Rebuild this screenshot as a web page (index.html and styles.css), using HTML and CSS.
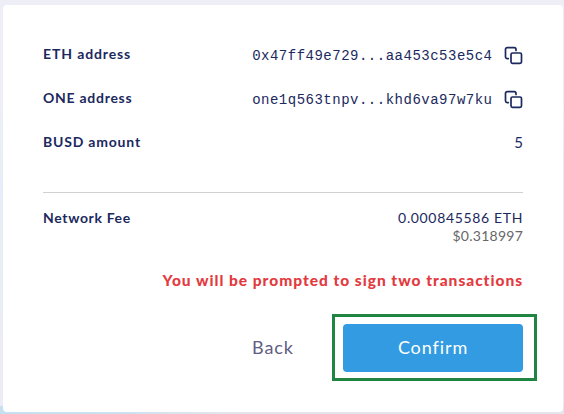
FILE: index.html
```html
<!DOCTYPE html>
<html lang="en">
<head>
<meta charset="utf-8">
<title>Confirm transfer</title>
<link rel="stylesheet" href="styles.css">
</head>
<body>
<main class="card">
  <div class="row">
    <span class="label eth">ETH address</span>
    <span class="address">0x47ff49e729...aa453c53e5c4</span>
    <svg class="copy" viewBox="0 0 20 20"><path d="M4.3 12.6H3.2A1.7 1.7 0 0 1 1.5 11V3.4a1.7 1.7 0 0 1 1.7-1.7h7.1A1.7 1.7 0 0 1 12 3.4v1.1"/><rect x="7" y="7" width="10.5" height="10.3" rx="1.5"/></svg>
  </div>
  <div class="row">
    <span class="label one">ONE address</span>
    <span class="address">one1q563tnpv...khd6va97w7ku</span>
    <svg class="copy" viewBox="0 0 20 20"><path d="M4.3 12.6H3.2A1.7 1.7 0 0 1 1.5 11V3.4a1.7 1.7 0 0 1 1.7-1.7h7.1A1.7 1.7 0 0 1 12 3.4v1.1"/><rect x="7" y="7" width="10.5" height="10.3" rx="1.5"/></svg>
  </div>
  <div class="row">
    <span class="label busd">BUSD amount</span>
    <span class="value">5</span>
  </div>
  <div class="fee">
    <span class="label network">Network Fee</span>
    <div class="amounts">
      <div class="value total">0.000845586 ETH</div>
      <div class="usd">$0.318997</div>
    </div>
  </div>
  <p class="warning">You will be prompted to sign two transactions</p>
  <div class="actions">
    <button class="back">Back</button>
    <div class="highlight"><button class="confirm">Confirm</button></div>
  </div>
</main>
</body>
</html>
```
FILE: styles.css
```css
* { box-sizing: border-box; }
body {
  margin: 0;
  height: 414px;
  padding: 5px 1px 2px 3px;
  overflow: hidden;
  background:
    linear-gradient(90deg, #c5e1ef 0, #cbe1ee 120px, #e5e6ed 230px) 0 100% / 100% 8px no-repeat,
    linear-gradient(#eeeff6 0, #eeeff6 100px, #e5eef8 180px, #e6eef8 260px, #ebecf5 340px);
  font-family: Lato, "Liberation Sans", sans-serif;
  color: #1b295e;
}
.card {
  height: 407px;
  padding: 27px 40px 0;
  border-radius: 4px;
  background: #fff;
}
.row { display: flex; align-items: center; height: 44px; }
.label { font-size: 14px; line-height: 18px; font-weight: 700; }
.eth { letter-spacing: .88px; }
.one { letter-spacing: .73px; }
.busd { letter-spacing: .8px; }
.network { letter-spacing: .65px; }
.address {
  margin: 4px 0 0 auto;
  font: 14px/18px "Liberation Mono", monospace;
  letter-spacing: .5px;
}
.copy {
  width: 20px;
  height: 20px;
  margin: 3px 0 0 10.5px;
  position: relative;
  left: .5px;
  fill: none;
  stroke: #1b295e;
  stroke-width: 1.7;
  stroke-linecap: round;
  stroke-linejoin: round;
}
.value { margin-left: auto; font-size: 14px; line-height: 18px; }
.row .value { font-size: 15px; }
.fee {
  display: flex;
  justify-content: space-between;
  margin-top: 28px;
  padding-top: 16px;
  border-top: 1px solid #d1d1d1;
}
.amounts { text-align: right; }
.total { letter-spacing: .65px; }
.usd { color: #676767; font-size: 14px; line-height: 18px; letter-spacing: .25px; }
.warning {
  margin: 25px 0 0;
  color: #e33a40;
  font-size: 15.5px;
  line-height: 20px;
  font-weight: 900;
  letter-spacing: .98px;
  text-align: right;
  white-space: nowrap;
}
.actions {
  display: flex;
  justify-content: flex-end;
  align-items: center;
  margin: 24px -14px 0 0;
}
button {
  padding: 0 0 2px;
  border: 0;
  font: 18px/24px Lato, sans-serif;
  letter-spacing: .9px;
}
.back { width: 118px; background: none; color: #625d82; }
.highlight { padding: 7px 11px 6px 8px; border: 3px solid #208442; }
.confirm {
  display: block;
  width: 180px;
  height: 48px;
  border-radius: 4px;
  background: #329be1;
  color: #fff;
}
```
